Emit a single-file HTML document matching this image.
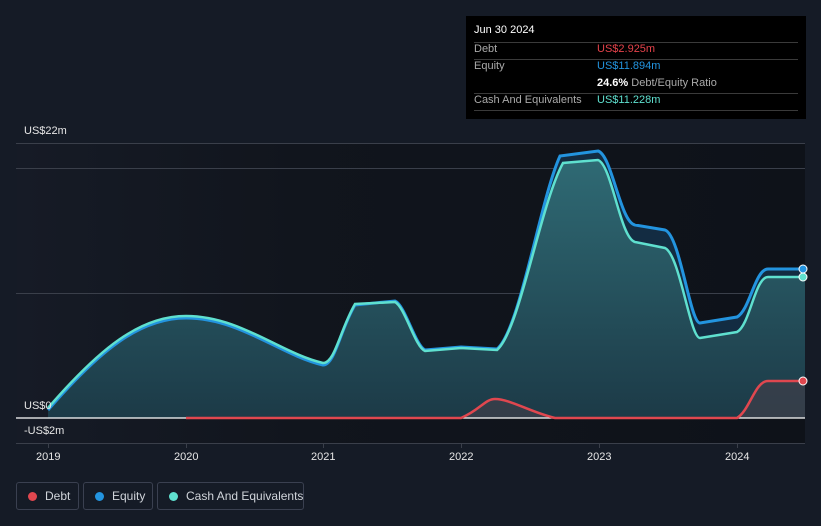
<!DOCTYPE html>
<html><head><style>
html,body{margin:0;width:821px;height:526px;background:#151b26;overflow:hidden;font-family:"Liberation Sans",sans-serif;position:relative}
.t{position:absolute;font-size:11px;color:#e6e6e6;white-space:nowrap}
#tip{position:absolute;left:466px;top:16px;width:340px;height:103px;background:#000;font-size:11px}
#tip div{white-space:nowrap}
#tip .r{position:absolute;left:8px;width:324px;border-top:1px solid #3a3a3a}
.leg{position:absolute;top:482px;height:28px;border:1px solid #3a4050;border-radius:3px;box-sizing:border-box;color:#d0d4da;font-size:12px;line-height:26px;white-space:nowrap}
.leg i{position:absolute;left:11px;top:9px;width:9px;height:9px;border-radius:50%}
</style></head><body>
<svg width="821" height="526" style="position:absolute;left:0;top:0">
<defs>
<linearGradient id="bg" x1="0" x2="1" y1="0" y2="0"><stop offset="0" stop-color="#161b26"/><stop offset="0.35" stop-color="#11151d"/><stop offset="1" stop-color="#0e1219"/></linearGradient>
<linearGradient id="fa" x1="0" x2="0" y1="0" y2="1"><stop offset="0" stop-color="#2f6a74"/><stop offset="1" stop-color="#1c3a47"/></linearGradient>
</defs>
<rect x="17" y="143" width="788" height="300" fill="url(#bg)"/>
<g stroke="#3a3f4a" stroke-width="1">
<line x1="16" x2="805" y1="143.5" y2="143.5"/><line x1="16" x2="805" y1="168.5" y2="168.5"/><line x1="16" x2="805" y1="293.5" y2="293.5"/><line x1="16" x2="805" y1="443.5" y2="443.5"/>
<line x1="48.5" x2="48.5" y1="443" y2="448"/><line x1="186.5" x2="186.5" y1="443" y2="448"/><line x1="323.5" x2="323.5" y1="443" y2="448"/><line x1="461.5" x2="461.5" y1="443" y2="448"/><line x1="599.5" x2="599.5" y1="443" y2="448"/><line x1="737.5" x2="737.5" y1="443" y2="448"/>
</g>
<path d="M48,410 C100,350 140,318 186,318 C240,318 280,355 323,365 C335,365 340,330 355,305 L395,301 C405,305 415,345 425,350 L461,347 L497,349 C520,330 540,200 560,156 L598,151 C612,155 620,222 635,225 L665,230 C680,235 690,323 700,323 L737,317 C750,310 755,269 768,269 L805,269 L805,418 L48,418 Z" fill="#132c42"/>
<path d="M48,408 C100,348 140,316 186,316 C240,316 280,353 323,363 C335,363 340,330 355,304 L395,302 C405,307 415,347 425,351 L461,348 L497,350 C520,330 540,205 563,163 L598,160 C612,165 620,238 635,242 L665,248 C680,255 690,338 700,338 L737,332 C750,325 755,277 768,277 L805,277 L805,418 L48,418 Z" fill="url(#fa)"/>
<path d="M48,410 C100,350 140,318 186,318 C240,318 280,355 323,365 C335,365 340,330 355,305 L395,301 C405,305 415,345 425,350 L461,347 L497,349 C520,330 540,200 560,156 L598,151 C612,155 620,222 635,225 L665,230 C680,235 690,323 700,323 L737,317 C750,310 755,269 768,269 L805,269" fill="none" stroke="#2394df" stroke-width="3"/>
<path d="M48,408 C100,348 140,316 186,316 C240,316 280,353 323,363 C335,363 340,330 355,304 L395,302 C405,307 415,347 425,351 L461,348 L497,350 C520,330 540,205 563,163 L598,160 C612,165 620,238 635,242 L665,248 C680,255 690,338 700,338 L737,332 C750,325 755,277 768,277 L805,277" fill="none" stroke="#5fe0cf" stroke-width="2.5"/>
<path d="M461,418 C480,410 485,399 495,399 C510,399 530,412 555,418 L737,418 C750,410 755,381 768,381 L805,381 L805,418 Z" fill="#3b3f4a" opacity="0.8"/>
<line x1="16" x2="805" y1="418" y2="418" stroke="#fff" stroke-width="1.2"/>
<path d="M186,418 L461,418 C480,410 485,399 495,399 C510,399 530,412 555,418 L737,418 C750,410 755,381 768,381 L805,381" fill="none" stroke="#e0474f" stroke-width="2.5"/>
<circle cx="803" cy="269" r="4" fill="#2394df" stroke="#fff" stroke-width="1"/>
<circle cx="803" cy="277" r="4" fill="#5fe0cf" stroke="#fff" stroke-width="1"/>
<circle cx="803" cy="381" r="4" fill="#e0474f" stroke="#fff" stroke-width="1"/>
</svg>
<div class="t" style="left:24px;top:125px">US$22m</div>
<div class="t" style="left:24px;top:400px">US$0</div>
<div class="t" style="left:24px;top:425px">-US$2m</div>
<div class="t" style="left:36px;top:451px">2019</div>
<div class="t" style="left:174px;top:451px">2020</div>
<div class="t" style="left:311px;top:451px">2021</div>
<div class="t" style="left:449px;top:451px">2022</div>
<div class="t" style="left:587px;top:451px">2023</div>
<div class="t" style="left:725px;top:451px">2024</div>
<div id="tip">
<div style="position:absolute;left:8px;top:8px;color:#fff">Jun 30 2024</div>
<div class="r" style="top:26px"></div>
<div style="position:absolute;left:8px;top:27px;color:#aaa">Debt</div><div style="position:absolute;left:131px;top:27px;color:#e5424a">US$2.925m</div>
<div class="r" style="top:43px"></div>
<div style="position:absolute;left:8px;top:44px;color:#aaa">Equity</div><div style="position:absolute;left:131px;top:44px;color:#2394df">US$11.894m</div>
<div style="position:absolute;left:131px;top:61px;color:#aaa"><b style="color:#fff">24.6%</b> Debt/Equity Ratio</div>
<div class="r" style="top:77px"></div>
<div style="position:absolute;left:8px;top:78px;color:#aaa">Cash And Equivalents</div><div style="position:absolute;left:131px;top:78px;color:#5fe0cf">US$11.228m</div>
<div class="r" style="top:94px"></div>
</div>
<div class="leg" style="left:16px;width:63px"><i style="background:#e0474f"></i><span style="position:absolute;left:28px">Debt</span></div>
<div class="leg" style="left:83px;width:70px"><i style="background:#2394df"></i><span style="position:absolute;left:28px">Equity</span></div>
<div class="leg" style="left:157px;width:147px"><i style="background:#5fe0cf"></i><span style="position:absolute;left:28px">Cash And Equivalents</span></div>
</body></html>
